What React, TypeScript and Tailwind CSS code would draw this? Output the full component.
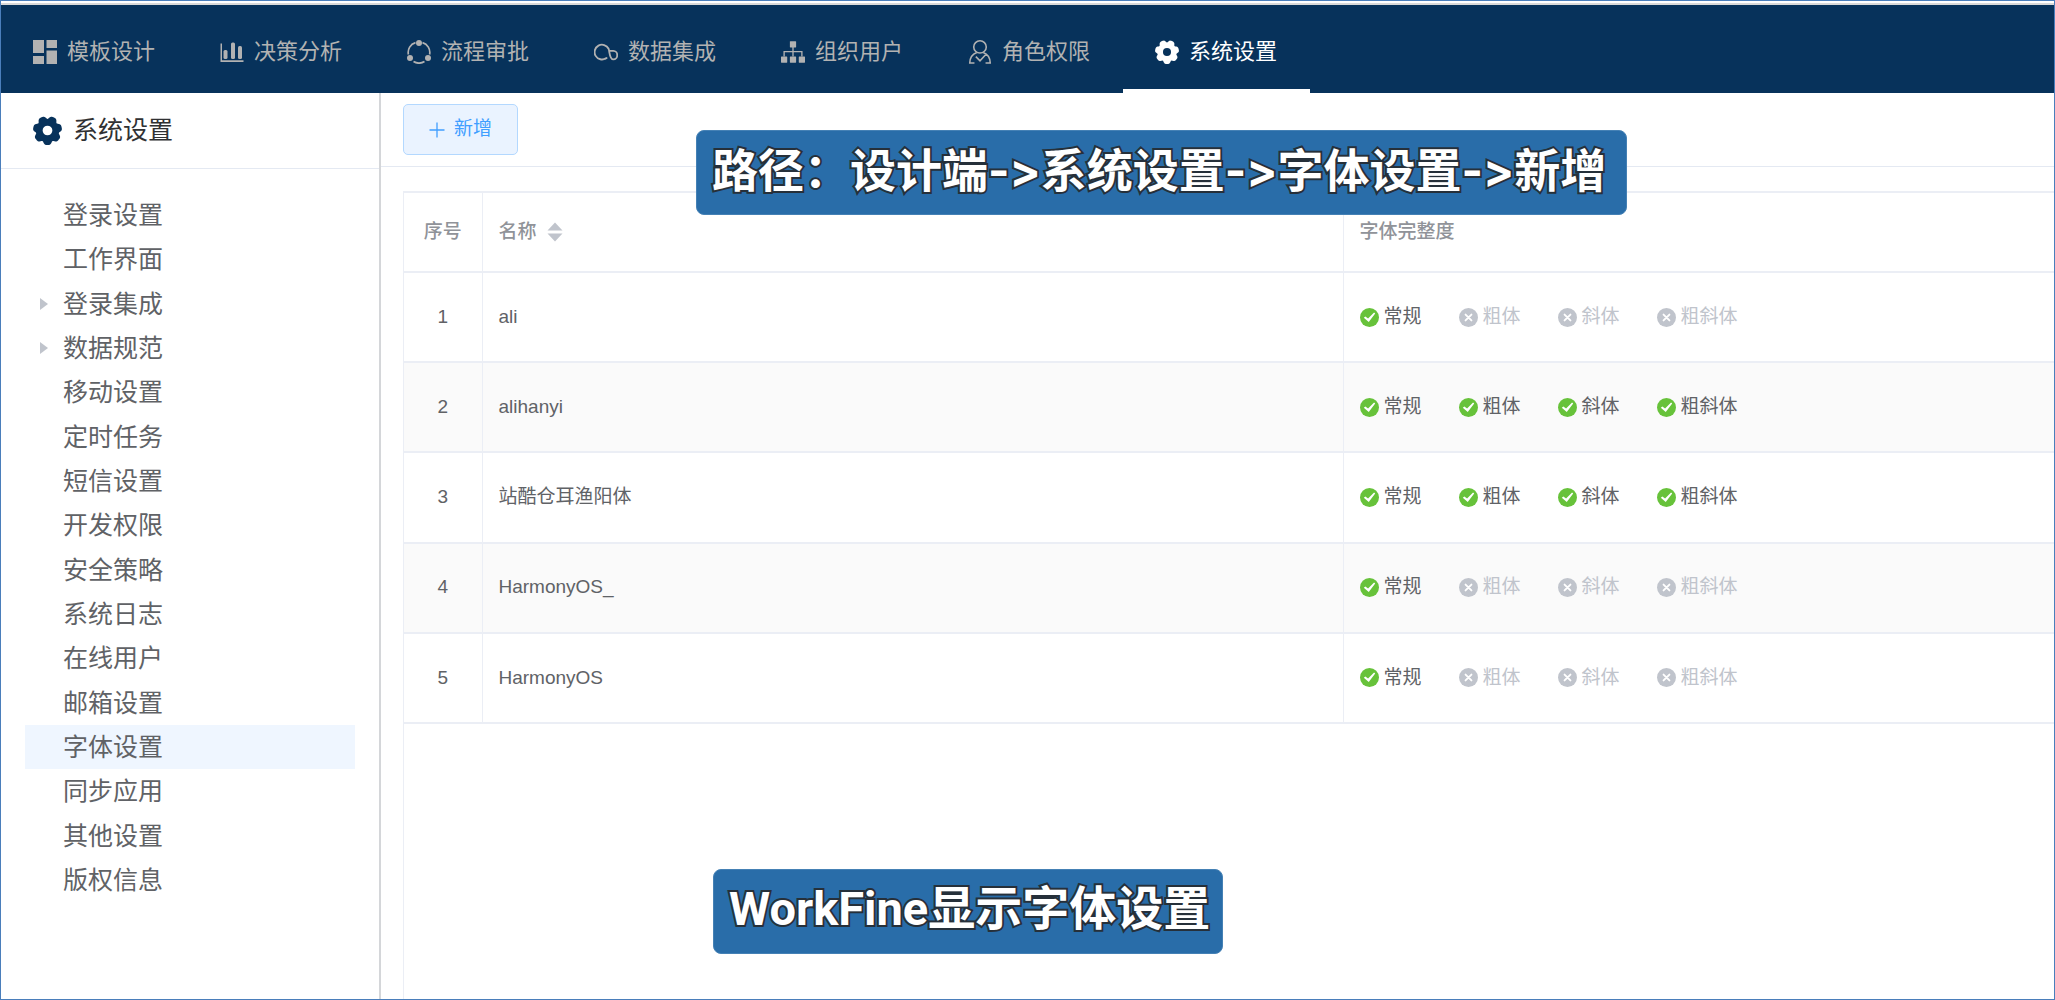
import type { ReactNode } from "react";

type IconProps = { className?: string };

// Outline of a seven-toothed gear, one tooth pointing straight down.
const gearOutline =
  "M" +
  Array.from({ length: 120 }, (_, i) => {
    const angle = (i * 3 * Math.PI) / 180;
    const notch = (1 - Math.cos(7 * (angle - Math.PI / 2))) / 2;
    const radius = 14 - 2.8 * Math.pow(notch, 2.5);
    return `${(14 + radius * Math.cos(angle)).toFixed(2)} ${(14 + radius * Math.sin(angle)).toFixed(2)}`;
  }).join("L") +
  "Z";

function GearIcon({ className }: IconProps) {
  return (
    <svg viewBox="0 0 28 28" className={className} fill="currentColor" aria-hidden="true">
      <path fillRule="evenodd" d={gearOutline + "M14 9.3A4.700 4.700 0 1 0 14 18.700A4.700 4.700 0 1 0 14 9.300Z"} />
    </svg>
  );
}

function TemplateIcon({ className }: IconProps) {
  return (
    <svg viewBox="0 0 24 24" className={className} fill="currentColor" aria-hidden="true">
      <path d="M0 0h11v13H0zM13.500 0H24v8H13.500zM0 16h11v8H0zM13.500 10.500H24V24H13.500z" />
    </svg>
  );
}

function ChartIcon({ className }: IconProps) {
  return (
    <svg viewBox="0 0 24 24" className={className} fill="currentColor" aria-hidden="true">
      <path d="M0.500 3.500H2V20.300H23.500V22H0.500z" />
      <rect x="3.500" y="10" width="4" height="9" rx="1.500" />
      <rect x="11" y="2.500" width="4" height="16.500" rx="1.500" />
      <rect x="18" y="6" width="4" height="13" rx="1.500" />
    </svg>
  );
}

function FlowIcon({ className }: IconProps) {
  return (
    <svg viewBox="0 0 24 24" className={className} fill="currentColor" aria-hidden="true">
      <path
        fill="none"
        stroke="currentColor"
        strokeWidth="1.700"
        d="M15.500 2.600A10.300 10.300 0 0 1 22.600 14.500M17.500 21.600A11 11 0 0 1 6.500 21.600M1.400 14.500A10.300 10.300 0 0 1 8.500 2.600"
      />
      <circle cx="12" cy="3" r="3" />
      <circle cx="3" cy="18" r="3" />
      <circle cx="21" cy="18" r="3" />
    </svg>
  );
}

function DataIcon({ className }: IconProps) {
  return (
    <svg viewBox="0 0 26 24" className={className} fill="none" stroke="currentColor" strokeWidth="2" aria-hidden="true">
      <path d="M13 18.800A8 8 0 1 1 15.800 8.500C17.200 12 16.500 20 21 20A4.200 4.600 0 0 0 21 10.800H17M8 20C11.500 20 13 19.500 14.200 18" />
    </svg>
  );
}

function OrgIcon({ className }: IconProps) {
  return (
    <svg viewBox="0 0 27 24" className={className} fill="currentColor" aria-hidden="true">
      <rect x="10" y="0" width="7" height="7" rx="0.500" />
      <rect x="0" y="17" width="7" height="7" rx="0.500" />
      <rect x="10" y="17" width="7" height="7" rx="0.500" />
      <rect x="20" y="17" width="7" height="7" rx="0.500" />
      <path fill="none" stroke="currentColor" strokeWidth="1.500" d="M13.500 6V17M3.500 17V11.500H23.500V17" />
    </svg>
  );
}

function RoleIcon({ className }: IconProps) {
  return (
    <svg viewBox="0 0 24 26" className={className} fill="none" stroke="currentColor" strokeWidth="1.700" aria-hidden="true">
      <ellipse cx="12" cy="7.500" rx="6.800" ry="6.600" />
      <path d="M8.500 13.500C3 15.500 1 19 0.900 25H6M15.500 13.500C21 15.500 23 19 23.100 25H18M7.500 18L12 22.500L18.500 15.500" />
    </svg>
  );
}

function PlusIcon({ className }: IconProps) {
  return (
    <svg viewBox="0 0 16 16" className={className} stroke="currentColor" strokeWidth="1.300" aria-hidden="true">
      <path d="M8 0.500V15.500M0.500 8H15.500" />
    </svg>
  );
}

function StateIcon({ on }: { on: boolean }) {
  return (
    <svg viewBox="0 0 20 20" className="size-[19px] shrink-0" aria-hidden="true">
      <circle cx="10" cy="10" r="10" fill={on ? "#67c23a" : "#c0c4cc"} />
      {on ? (
        <path fill="#fff" d="M4 10.300L5.600 8.900L8.500 11L14.800 4.800L16 5.800L9.200 14.800Z" />
      ) : (
        <path stroke="#fff" strokeWidth="2" strokeLinecap="round" d="M6.900 6.900L13.100 13.100M13.100 6.900L6.900 13.100" />
      )}
    </svg>
  );
}

const tabs: { label: string; icon: ReactNode; active?: boolean }[] = [
  { label: "模板设计", icon: <TemplateIcon className="size-6" /> },
  { label: "决策分析", icon: <ChartIcon className="size-6" /> },
  { label: "流程审批", icon: <FlowIcon className="size-6" /> },
  { label: "数据集成", icon: <DataIcon className="size-6" /> },
  { label: "组织用户", icon: <OrgIcon className="size-6" /> },
  { label: "角色权限", icon: <RoleIcon className="size-6" /> },
  { label: "系统设置", icon: <GearIcon className="size-6" />, active: true },
];

const menu: { label: string; expandable?: boolean; active?: boolean }[] = [
  { label: "登录设置" },
  { label: "工作界面" },
  { label: "登录集成", expandable: true },
  { label: "数据规范", expandable: true },
  { label: "移动设置" },
  { label: "定时任务" },
  { label: "短信设置" },
  { label: "开发权限" },
  { label: "安全策略" },
  { label: "系统日志" },
  { label: "在线用户" },
  { label: "邮箱设置" },
  { label: "字体设置", active: true },
  { label: "同步应用" },
  { label: "其他设置" },
  { label: "版权信息" },
];

const styles = ["常规", "粗体", "斜体", "粗斜体"];

const fonts = [
  { name: "ali", have: 1 },
  { name: "alihanyi", have: 4 },
  { name: "站酷仓耳渔阳体", have: 4 },
  { name: "HarmonyOS_", have: 1 },
  { name: "HarmonyOS", have: 1 },
];

function Header() {
  return (
    <header className="border-t-2 border-[#d9d9d9] bg-[#07325b]">
      <nav className="flex h-[88px]" aria-label="主导航">
        {tabs.map((tab) => (
          <a
            key={tab.label}
            href="#"
            aria-current={tab.active ? "page" : undefined}
            className={
              tab.active
                ? "flex items-center gap-[10px] border-b-4 border-white pt-2.5 pr-[33px] pl-8 text-[22px] leading-8 whitespace-nowrap text-white"
                : "flex items-center gap-[10px] border-b-4 border-transparent pt-2.5 pr-[33px] pl-8 text-[22px] leading-8 whitespace-nowrap text-[#b2b2b2]"
            }
          >
            {tab.icon}
            {tab.label}
          </a>
        ))}
      </nav>
    </header>
  );
}

function Sidebar() {
  return (
    <aside className="flex w-[380px] shrink-0 flex-col border-r-2 border-[#d4d6d9]">
      <h1 className="flex h-[76px] items-center gap-[11px] border-b border-[#e4e9f2] px-8 text-[25px] text-[#303133]">
        <GearIcon className="size-[29px] text-[#07325b]" />
        系统设置
      </h1>
      <ul className="mx-6 mt-6 grid h-[709px] auto-rows-fr text-[25px] text-[#606266]">
        {menu.map((item) => (
          <li key={item.label} className="flex">
            <a
              href="#"
              aria-current={item.active ? "page" : undefined}
              className={
                item.active
                  ? "flex flex-1 items-center bg-[#eff6ff] leading-9"
                  : "flex flex-1 items-center leading-9"
              }
            >
              <span className="flex w-[38px] justify-center" aria-hidden="true">
                {item.expandable && (
                  <svg viewBox="0 0 8 12" className="h-3 w-2" fill="#c0c4cc">
                    <path d="M0 0L8 6L0 12Z" />
                  </svg>
                )}
              </span>
              {item.label}
            </a>
          </li>
        ))}
      </ul>
    </aside>
  );
}

function FontTable() {
  return (
    <table className="h-[533px] w-full table-fixed border-collapse border-y-2 border-[#ebeef5] text-left text-[19px] text-[#606266]">
      <colgroup>
        <col className="w-[78px]" />
        <col className="w-[861px]" />
        <col />
      </colgroup>
      <thead className="text-[#909399]">
        <tr className="h-20 border-b-2 border-[#ebeef5]">
          <th className="border-r border-[#ebeef5] text-center font-medium">序号</th>
          <th className="border-r border-[#ebeef5] px-4 font-medium">
            <button type="button" className="flex items-center gap-[10px]">
              名称
              <svg viewBox="0 0 16 20" className="h-5 w-4" fill="#c0c4cc" aria-hidden="true">
                <path d="M8 0.500L15.500 8.500H0.500ZM8 19.500L0.500 11.500H15.500Z" />
              </svg>
            </button>
          </th>
          <th className="px-4 font-medium">字体完整度</th>
        </tr>
      </thead>
      <tbody>
        {fonts.map((font, row) => (
          <tr key={font.name} className="border-b-2 border-[#ebeef5] even:bg-[#fafafa]">
            <td className="border-r border-[#ebeef5] text-center">{row + 1}</td>
            <td className="border-r border-[#ebeef5] px-4">{font.name}</td>
            <td className="px-4">
              <ul className="flex gap-[37px]">
                {styles.map((style, i) => (
                  <li
                    key={style}
                    className={
                      i < font.have
                        ? "flex items-center gap-[5px] whitespace-nowrap"
                        : "flex items-center gap-[5px] whitespace-nowrap text-[#c0c4cc]"
                    }
                  >
                    <StateIcon on={i < font.have} />
                    {style}
                  </li>
                ))}
              </ul>
            </td>
          </tr>
        ))}
      </tbody>
    </table>
  );
}

export default function App() {
  return (
    <div className="relative flex min-h-screen flex-col border border-[#4a7ebb] bg-white pt-[2px] font-['Liberation_Sans','Noto_Sans_CJK_SC',sans-serif]">
      <Header />
      <div className="flex flex-1">
        <Sidebar />
        <main className="flex min-w-0 flex-1 flex-col">
          <div className="flex h-[74px] items-center border-b border-[#e4e9f2] px-[22px]">
            <button
              type="button"
              className="flex h-[51px] items-center gap-[9px] rounded-[5px] border border-[#b3d8ff] bg-[#eaf3ff] px-[25px] text-[19px] whitespace-nowrap text-[#409eff]"
            >
              <PlusIcon className="size-4" />
              新增
            </button>
          </div>
          <div className="mt-6 ml-[22px] flex-1 border-l border-[#ebeef5]">
            <FontTable />
          </div>
        </main>
      </div>
      <div className="absolute top-[129px] left-[695px] flex h-[85px] items-center rounded-lg border border-[#4581b5] bg-[#256aa7]/98 pr-5 pb-1.5 pl-[15px] font-['Inter','Noto_Sans_CJK_SC',sans-serif] text-[46px] leading-none font-bold whitespace-nowrap text-white [-webkit-text-stroke:4px_#26303a] [font-feature-settings:'calt'_0] [paint-order:stroke_fill]">
        路径：设计端-&gt;系统设置-&gt;字体设置-&gt;新增
      </div>
      <div className="absolute top-[868px] left-[712px] flex h-[85px] items-center rounded-lg border border-[#4581b5] bg-[#256aa7]/98 pr-3 pb-1.5 pl-[15px] font-['Roboto','Noto_Sans_CJK_SC',sans-serif] text-[47px] leading-none font-bold whitespace-nowrap text-white [-webkit-text-stroke:4px_#26303a] [paint-order:stroke_fill]">
        WorkFine显示字体设置
      </div>
    </div>
  );
}
